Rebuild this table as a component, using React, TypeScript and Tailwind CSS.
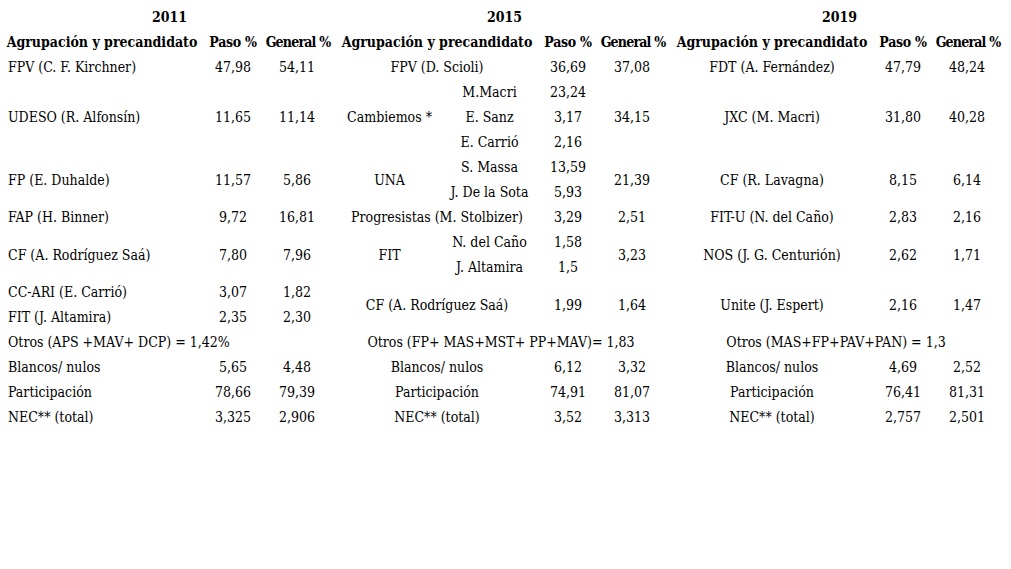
import type { ReactNode } from "react"

function Cell({ children, className = "" }: { children?: ReactNode; className?: string }) {
  return (
    <div className={`flex items-center justify-center whitespace-nowrap ${className}`}>
      {children}
    </div>
  )
}

function Name({ children, className = "" }: { children?: ReactNode; className?: string }) {
  return <Cell className={`justify-start pl-[6px] ${className}`}>{children}</Cell>
}

function Header({ wide = false }: { wide?: boolean }) {
  return (
    <>
      <Cell className={`font-bold ${wide ? "col-span-2" : ""}`}>Agrupación y precandidato</Cell>
      <Cell className="font-bold tracking-[-0.3px]">Paso %</Cell>
      <Cell className="font-bold tracking-[-0.8px] pl-[2px]">General %</Cell>
    </>
  )
}

function Block({ year, children, cols }: { year: string; children: ReactNode; cols: string }) {
  return (
    <div className="w-[335px] shrink-0">
      <div className="h-[25px] flex items-center justify-center font-bold">{year}</div>
      <div className={`grid auto-rows-[25px] w-[328px] ${cols}`}>{children}</div>
    </div>
  )
}

export default function App() {
  return (
    <div className="w-[1011px] h-[569px] bg-white text-black text-[14px] font-['DejaVu_Serif_Condensed',serif] pt-[5px] pl-[2px] flex">
      {/* 2011 */}
      <Block year="2011" cols="grid-cols-[200px_62px_66px]">
        <Header />
        <Name>FPV (C. F. Kirchner)</Name>
        <Cell>47,98</Cell>
        <Cell>54,11</Cell>
        <Name className="row-span-3">UDESO (R. Alfonsín)</Name>
        <Cell className="row-span-3">11,65</Cell>
        <Cell className="row-span-3">11,14</Cell>
        <Name className="row-span-2">FP (E. Duhalde)</Name>
        <Cell className="row-span-2">11,57</Cell>
        <Cell className="row-span-2">5,86</Cell>
        <Name>FAP (H. Binner)</Name>
        <Cell>9,72</Cell>
        <Cell>16,81</Cell>
        <Name className="row-span-2">CF (A. Rodríguez Saá)</Name>
        <Cell className="row-span-2">7,80</Cell>
        <Cell className="row-span-2">7,96</Cell>
        <Name>CC-ARI (E. Carrió)</Name>
        <Cell>3,07</Cell>
        <Cell>1,82</Cell>
        <Name>FIT (J. Altamira)</Name>
        <Cell>2,35</Cell>
        <Cell>2,30</Cell>
        <Name className="col-span-3">Otros (APS +MAV+ DCP) = 1,42%</Name>
        <Name>Blancos/ nulos</Name>
        <Cell>5,65</Cell>
        <Cell>4,48</Cell>
        <Name>Participación</Name>
        <Cell>78,66</Cell>
        <Cell>79,39</Cell>
        <Name>NEC** (total)</Name>
        <Cell>3,325</Cell>
        <Cell>2,906</Cell>
      </Block>

      {/* 2015 */}
      <Block year="2015" cols="grid-cols-[105px_95px_62px_66px]">
        <Header wide />
        <Cell className="col-span-2">FPV (D. Scioli)</Cell>
        <Cell>36,69</Cell>
        <Cell>37,08</Cell>
        <Cell className="row-span-3">Cambiemos *</Cell>
        <Cell>M.Macri</Cell>
        <Cell>23,24</Cell>
        <Cell className="row-span-3">34,15</Cell>
        <Cell>E. Sanz</Cell>
        <Cell>3,17</Cell>
        <Cell>E. Carrió</Cell>
        <Cell>2,16</Cell>
        <Cell className="row-span-2">UNA</Cell>
        <Cell>S. Massa</Cell>
        <Cell>13,59</Cell>
        <Cell className="row-span-2">21,39</Cell>
        <Cell>J. De la Sota</Cell>
        <Cell>5,93</Cell>
        <Cell className="col-span-2">Progresistas (M. Stolbizer)</Cell>
        <Cell>3,29</Cell>
        <Cell>2,51</Cell>
        <Cell className="row-span-2">FIT</Cell>
        <Cell>N. del Caño</Cell>
        <Cell>1,58</Cell>
        <Cell className="row-span-2">3,23</Cell>
        <Cell>J. Altamira</Cell>
        <Cell>1,5</Cell>
        <Cell className="col-span-2 row-span-2">CF (A. Rodríguez Saá)</Cell>
        <Cell className="row-span-2">1,99</Cell>
        <Cell className="row-span-2">1,64</Cell>
        <Cell className="col-span-4">Otros (FP+ MAS+MST+ PP+MAV)= 1,83</Cell>
        <Cell className="col-span-2">Blancos/ nulos</Cell>
        <Cell>6,12</Cell>
        <Cell>3,32</Cell>
        <Cell className="col-span-2">Participación</Cell>
        <Cell>74,91</Cell>
        <Cell>81,07</Cell>
        <Cell className="col-span-2">NEC** (total)</Cell>
        <Cell>3,52</Cell>
        <Cell>3,313</Cell>
      </Block>

      {/* 2019 */}
      <Block year="2019" cols="grid-cols-[200px_62px_66px]">
        <Header />
        <Cell>FDT (A. Fernández)</Cell>
        <Cell>47,79</Cell>
        <Cell>48,24</Cell>
        <Cell className="row-span-3">JXC (M. Macri)</Cell>
        <Cell className="row-span-3">31,80</Cell>
        <Cell className="row-span-3">40,28</Cell>
        <Cell className="row-span-2">CF (R. Lavagna)</Cell>
        <Cell className="row-span-2">8,15</Cell>
        <Cell className="row-span-2">6,14</Cell>
        <Cell>FIT-U (N. del Caño)</Cell>
        <Cell>2,83</Cell>
        <Cell>2,16</Cell>
        <Cell className="row-span-2">NOS (J. G. Centurión)</Cell>
        <Cell className="row-span-2">2,62</Cell>
        <Cell className="row-span-2">1,71</Cell>
        <Cell className="row-span-2">Unite (J. Espert)</Cell>
        <Cell className="row-span-2">2,16</Cell>
        <Cell className="row-span-2">1,47</Cell>
        <Cell className="col-span-3">Otros (MAS+FP+PAV+PAN) = 1,3</Cell>
        <Cell>Blancos/ nulos</Cell>
        <Cell>4,69</Cell>
        <Cell>2,52</Cell>
        <Cell>Participación</Cell>
        <Cell>76,41</Cell>
        <Cell>81,31</Cell>
        <Cell>NEC** (total)</Cell>
        <Cell>2,757</Cell>
        <Cell>2,501</Cell>
      </Block>
    </div>
  )
}
